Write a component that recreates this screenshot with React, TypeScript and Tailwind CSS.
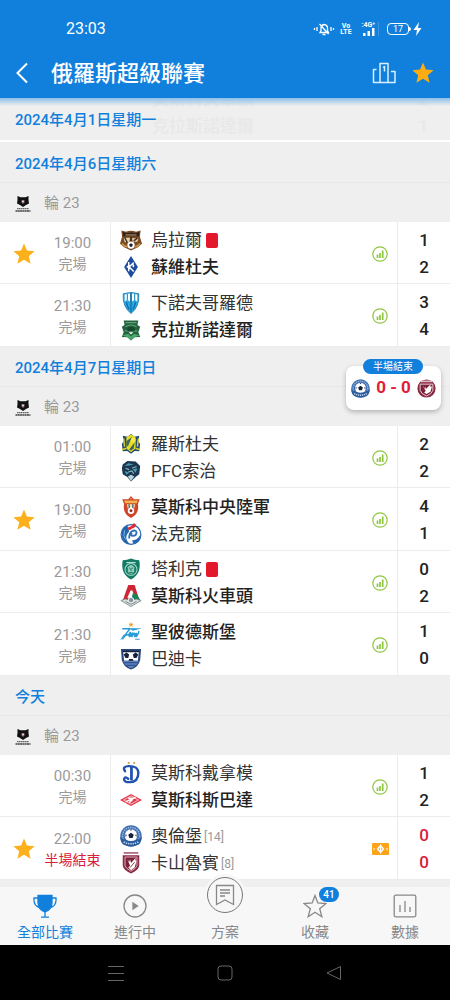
import type { ReactNode } from "react";

const STAR = "M12 .6l3.200 7.700 8.400.7-6.400 5.400 2 8.200-7.200-4.400-7.200 4.400 2-8.200L.4 9l8.400-.7z";

function Star({ className }: { className: string }) {
  return (
    <svg viewBox="0 0 24 24" className={className} aria-hidden="true">
      <path d={STAR} fill="currentColor" />
    </svg>
  );
}

const crests: Record<string, ReactNode> = {
  ural: (
    <>
      <path d="M1.500 1.500l5 1.500Q12 1 17.500 3l5-1.500-.8 7L24 16l-4.500 4L12 23.500 4.500 20 0 16l2.300-7.500z" fill="#7a4a25" />
      <path d="M3 3l4 1.500Q12 3 17 4.500L21 3l-.5 5h-17z" fill="#2c211b" />
      <path d="M6 6.500h12" stroke="#b48d5c" strokeWidth="1.300" />
      <path d="M4 9.500h7l-1 5H5zM13 10h7l-1 4h-5z" fill="#e8d3b0" />
      <path d="M5 9l3 6M12 9v5M19 10l-4 3" stroke="#40271a" strokeWidth="1.600" />
      <path d="M2 16q4 4 6 3M22 16q-4 4-6 3" stroke="#d09548" strokeWidth="1.800" fill="none" />
      <circle cx="12" cy="17.500" r="4" fill="#fff" />
      <path d="M12 15.500l2 1.500-.8 2.300h-2.400L10 17z" fill="#222" />
    </>
  ),
  krylia: (
    <>
      <path d="M12 0l7.500 12L12 24 4.500 12z" fill="#1d4c9e" />
      <path d="M9.500 6.500v10M10 12l5-5M10 12l5 5M7.500 12.500l3-3M13 8.500q3 2 1 3.500" stroke="#fff" strokeWidth="1.600" fill="none" />
    </>
  ),
  nizhny: (
    <>
      <path d="M3.500 2Q12-1 20.500 2q1 14-8.500 21.500Q2.500 16 3.500 2z" fill="#2aa7df" stroke="#2584b8" />
      <path d="M5 3q3-1.500 6-1.500V10q-2 0-3-3-1 3-2.800 3zM13 1.500q3 0 6 1.500l-.2 7Q17 10 16 7q-1 3-3 3z" fill="#fff" />
      <path d="M8 2v6M16 2v6" stroke="#2584b8" strokeWidth="1.200" />
      <path d="M12 1v21M7 11q1 5 3 8M17 11q-1 5-3 8" stroke="#156ba7" strokeWidth="1.400" fill="none" />
    </>
  ),
  krasnodar: (
    <>
      <path d="M4 1.500h16l-1 5 3 2-2 6 2 5-6 .5-4 3.500L8 20l-6-.5 2-5-2-6 3-2z" fill="#21633f" />
      <path d="M6 4h12M6 8.500q6-4 12 0M5 13h14" stroke="#5f9f75" strokeWidth="1.200" fill="none" />
      <path d="M8 9.500q4-2 8 0V13H8z" fill="#164a2d" />
      <path d="M2 18l7-2 3 3 3-3 7 2-6 1.500-4 3.500-4-3.500z" fill="#49a968" />
      <path d="M9.500 14.500h5L12 17z" fill="#fff" />
    </>
  ),
  rostov: (
    <>
      <path d="M3 3l5 1 4-3 4 3 5-1-1 6 2 3-1 8-5-.5-4 3-4-3-5 .5-1-8 2-3z" fill="#254d6e" />
      <path d="M7 4.500l5-3 5 3v12L12 21l-5-4z" fill="#e9dc22" />
      <path d="M7 9l6-5-4 10-2 1zM10 18l6-8-1 7-3 2z" fill="#3b6665" />
      <circle cx="14.500" cy="7.500" r="2.600" fill="#f5ea4b" />
      <path d="M2 18l5-1M17 17l5 1M4 6l1 9M20 6l-1 9" stroke="#dccf2c" strokeWidth="1.600" />
    </>
  ),
  sochi: (
    <>
      <path d="M3 5l5-4 9 .5 5 5-1 9-4 3-5 5-4-5-5-3L2 9z" fill="#1c3752" />
      <path d="M5 6.500l4-3 6 1.500-5 1zM14 10l5-1-2 5zM5 12l5 2-3 2z" fill="#4b9cad" />
      <path d="M6 9l4 1.500M13 9l5-2M9 13l4-1 2 3" stroke="#86bcc5" strokeWidth="1.200" fill="none" />
      <path d="M8.500 18l3.500-2 3.500 2-3.500 5z" fill="#b7d7e1" />
    </>
  ),
  cska: (
    <>
      <path d="M12 0l3 3.500h6.500L19.500 9q2 10-7.500 15Q2.500 19 4.500 9l-2-5.500H9z" fill="#ce4327" />
      <path d="M4.500 5h15l-1 3h-13z" fill="#efb44d" />
      <path d="M7 9h10q1 7-5 12Q6 16 7 9z" fill="#d9582f" />
      <path d="M7.500 9h9l-1 4h-7z" fill="#f8e3a5" />
      <path d="M10 9v4M14 9v4" stroke="#274f93" strokeWidth="1.300" />
      <path d="M12 1.500l.8 2h-1.600z" fill="#ffe476" />
      <circle cx="12" cy="16" r="3.500" fill="#fff" />
      <circle cx="12" cy="16" r="1.600" fill="#a32a25" />
    </>
  ),
  fakel: (
    <>
      <circle cx="12" cy="12.500" r="10.800" fill="#fff" stroke="#2868ad" strokeWidth="1.300" />
      <path d="M8 2.500A11 11 0 0 0 11 23.300q-5-4-4-9 1-3 3-5z" fill="#2566b0" />
      <path d="M15 23q8-3 7.500-11-3 7-9.500 7z" fill="#2566b0" />
      <path d="M10 17q0-6 3-8 4-2 5 1 0 4-4 4-3 0-1-3" fill="none" stroke="#2b70b7" strokeWidth="2" />
      <path d="M8 5q5-1 7-5 2 2 3 1.500Q16 6 13 6q-1 2-3.500 1.500z" fill="#e62938" />
      <path d="M5 8q-2 6 1 10" stroke="#8bbbe0" fill="none" />
    </>
  ),
  akhmat: (
    <>
      <path d="M12 .5q4 2 9 2Q24 17 12 23.500 0 17 3 2.500q5 0 9-2z" fill="#137a65" />
      <path d="M7 5h10" stroke="#b9e0d4" strokeWidth="1.400" />
      <circle cx="12" cy="12.500" r="6.500" fill="none" stroke="#97d0bf" strokeWidth="1.200" />
      <path d="M8.500 10q3.500-5 7 0v5q-3.500 5-7 0z" fill="#8fcbbb" />
      <path d="M10 11h1m2 0h1m-2 0v3m-2 2h4" stroke="#0b6a56" />
    </>
  ),
  lokomotiv: (
    <>
      <path d="M9 0h7l5 16-9 4-9-3z" fill="#cf2635" />
      <path d="M11.500 6h2l2.500 8H8z" fill="#fff" />
      <path d="M14 9l4 1 4 6-7 4-3-3z" fill="#16845a" />
      <path d="M1 17q5-3 8-1 3-4 6 0 3-2 8 1l-11 6.500z" fill="#d5dcdc" stroke="#6a7777" strokeWidth=".8" />
      <circle cx="12" cy="16.500" r="3" fill="#84949a" stroke="#fff" />
      <path d="M6 18l6 3 6-3" stroke="#7a8989" fill="none" />
    </>
  ),
  zenit: (
    <>
      <path d="M3 8.500h8q-3 3-8 11M7 15h4q2-2 0-2.500-2 2-1 4.500 2 0 3-2l1-2-1 4q3-5 3.500-3l-.5 3q1.500-1 2-3.500l-.5 3.500q2-1 3-5.500" fill="none" stroke="#249bd5" strokeWidth="1.500" strokeLinejoin="round" strokeLinecap="round" />
      <path d="M10 8h14l-10 2.500zM0 21l4-6 6-1-4 2.500z" fill="#249bd5" />
      <path d="M12 1l.8 2h2.200l-1.700 1.400.7 2.100-2-1.200-2 1.200.7-2.100L9 3h2.200z" fill="#e8a13b" />
      <path d="M16.500 20h5" stroke="#65a7cf" strokeWidth="1.300" />
    </>
  ),
  baltika: (
    <>
      <path d="M1 1h22l-1 12q-2 8-10 10.500Q4 21 2 13z" fill="#28477d" />
      <path d="M3.500 4h17l-1 10h-15z" fill="#fff" />
      <path d="M3 3h18v1.500H3zM4 7l3-2 3 2-1 4H6zm10 0l3-2 3 2-2 4h-3zM10 12h4l1 3H9z" fill="#17213a" />
      <path d="M3.500 14h17q-2 6-8.500 8-6.500-2-8.500-8z" fill="#5c83bd" />
      <path d="M5 16h14M7 19h10" stroke="#2f5491" strokeWidth="1.300" />
    </>
  ),
  dynamo: (
    <>
      <path d="M8.500 1h2m4 0h2" stroke="#c69c3a" strokeWidth="1.800" />
      <path d="M12.500 5v15" stroke="#2152ae" strokeWidth="3" />
      <path d="M5.500 10Q2 5 9 4.500 20 4 20 12q0 9.500-9 10-7 .2-6.500-3.500Q5.500 15 9 18.500" fill="none" stroke="#2152ae" strokeWidth="2.600" strokeLinecap="round" />
    </>
  ),
  spartak: (
    <>
      <path d="M0 12L12 5.500 24 12l-12 6.500z" fill="#e13b4d" />
      <path d="M4 12l8-4.500L20 12l-8 4.500z" fill="none" stroke="#ffc9ce" />
      <path d="M6 14l11-5M9 10h4q2 1-1 3l-2 2" fill="none" stroke="#fff" strokeWidth="1.600" />
    </>
  ),
  orenburg: (
    <>
      <circle cx="12" cy="12" r="11.700" fill="#3f70b3" />
      <circle cx="12" cy="12" r="9.300" fill="none" stroke="#a5bfe2" strokeWidth="1.500" strokeDasharray="1.500 1" />
      <circle cx="12" cy="11.500" r="6.800" fill="#fff" />
      <path d="M12 8.500l3 2.200-1.200 3.500h-3.600L9 10.700zM11 5h2l-1 1.500zM6 10l1.500 1L6 13zM18 10l-1.500 1 1.500 2z" fill="#15243a" />
      <path d="M0 13q12 9 24 0-1 7-4 8.500-8 4-16 0Q1 20 0 13z" fill="#2b5d9f" />
      <path d="M4 18.500q8 4 16 0" fill="none" stroke="#c5d5ec" strokeWidth="1.700" strokeDasharray="1.500 1" />
    </>
  ),
  rubin: (
    <>
      <path d="M4 1h16" stroke="#a8627a" strokeWidth="1.800" />
      <path d="M3 3.500h18v11.500q-1 5-9 8.500Q4 20 3 15z" fill="#8a2942" />
      <path d="M5.500 5.500h13V15q-1 3-6.500 6-5.500-3-6.500-6z" fill="#7a2038" stroke="#e2bcc7" />
      <path d="M8 8l2 3 1-3 1 4 5-5.500v3l1 .5-2 7-4 3-3-3 2-2z" fill="#fff" />
      <path d="M11 17l5-6" stroke="#8a2942" />
    </>
  ),
  rubinRound: (
    <>
      <circle cx="12" cy="12" r="11.500" fill="#8a2942" />
      <path d="M5 3h14" stroke="#dfbfc9" strokeWidth="2" />
      <path d="M4 6.500h16v8q-1 4-8 7-7-3-8-7z" fill="#7a2038" stroke="#ecd4da" strokeWidth="1.200" />
      <path d="M7 8l3 4 1-3v4l6-6v3l2-1-2 7-5 3-3-2 2-2z" fill="#fff" />
    </>
  ),
};

function Crest({ id, className = "size-[22px]" }: { id: string; className?: string }) {
  return (
    <svg viewBox="0 0 24 24" className={`${className} shrink-0`} aria-hidden="true">
      {crests[id]}
    </svg>
  );
}

function LeagueLogo() {
  return (
    <svg viewBox="0 0 16 16" className="size-4 shrink-0" aria-hidden="true">
      <path d="M2.500 0l3 1.200h5l3-1.200v4l.5 3.500-3 1.500-3 2-3-2-3-1.500L2.500 4z" fill="#111" />
      <path d="M6.500 4h3v2.500L8 8 6.500 6.500z" fill="#8c6468" />
      <path d="M7.300 4.700h1.400v1.500H7.300z" fill="#fff" />
      <path d="M2 12.700h12" stroke="#666" strokeWidth="1.200" strokeDasharray="1.600 .4" />
      <path d="M.5 15h15" stroke="#444" strokeWidth="1.500" strokeDasharray="2 .3" />
    </svg>
  );
}

function StatsIcon() {
  return (
    <svg viewBox="0 0 16 16" className="size-4" fill="none" stroke="#8fc641" aria-hidden="true">
      <circle cx="8" cy="8" r="7.200" strokeWidth="1.200" />
      <path d="M5.500 8.500V12M8 7v5M10.700 4.500V12" strokeWidth="1.700" />
    </svg>
  );
}

function CashIcon() {
  return (
    <svg viewBox="0 0 17 12" className="h-3 w-[17px]" aria-hidden="true">
      <rect width="17" height="12" rx="1" fill="#fba41a" />
      <path d="M1.500 4.500L3 6 1.500 7.500zM15.500 4.500L14 6l1.500 1.500z" fill="#fff" />
      <path d="M8.500 2.500L11.500 6l-3 3.500L5.500 6z" fill="none" stroke="#fff" strokeWidth="1.300" />
      <path d="M8.500 1.500v9M7.500 5h2M7.500 7h2" stroke="#fff" />
    </svg>
  );
}

type Team = { name: string; crest: string; score: number; winner?: boolean; red?: boolean; rank?: number };
type Match = { time: string; starred?: boolean; live?: boolean; teams: [Team, Team] };

const days: { date: string; matches: Match[] }[] = [
  {
    date: "2024年4月6日星期六",
    matches: [
      { time: "19:00", starred: true, teams: [{ name: "烏拉爾", crest: "ural", score: 1, red: true }, { name: "蘇維杜夫", crest: "krylia", score: 2, winner: true }] },
      { time: "21:30", teams: [{ name: "下諾夫哥羅德", crest: "nizhny", score: 3 }, { name: "克拉斯諾達爾", crest: "krasnodar", score: 4, winner: true }] },
    ],
  },
  {
    date: "2024年4月7日星期日",
    matches: [
      { time: "01:00", teams: [{ name: "羅斯杜夫", crest: "rostov", score: 2 }, { name: "PFC索治", crest: "sochi", score: 2 }] },
      { time: "19:00", starred: true, teams: [{ name: "莫斯科中央陸軍", crest: "cska", score: 4, winner: true }, { name: "法克爾", crest: "fakel", score: 1 }] },
      { time: "21:30", teams: [{ name: "塔利克", crest: "akhmat", score: 0, red: true }, { name: "莫斯科火車頭", crest: "lokomotiv", score: 2, winner: true }] },
      { time: "21:30", teams: [{ name: "聖彼德斯堡", crest: "zenit", score: 1, winner: true }, { name: "巴迪卡", crest: "baltika", score: 0 }] },
    ],
  },
  {
    date: "今天",
    matches: [
      { time: "00:30", teams: [{ name: "莫斯科戴拿模", crest: "dynamo", score: 1 }, { name: "莫斯科斯巴達", crest: "spartak", score: 2, winner: true }] },
      { time: "22:00", starred: true, live: true, teams: [{ name: "奧倫堡", crest: "orenburg", score: 0, rank: 14 }, { name: "卡山魯賓", crest: "rubin", score: 0, rank: 8 }] },
    ],
  },
];

function MatchRow({ match }: { match: Match }) {
  return (
    <li className="flex h-[62px] border-b border-[#ececec] bg-white even:h-[63px]">
      <div className="flex w-[35px] shrink-0 items-center pt-0.5 pl-[13px]">
        {match.starred && (
          <button type="button" aria-label="取消收藏" className="text-[#fbb01c]">
            <Star className="size-[22px]" />
          </button>
        )}
      </div>
      <div className="flex w-[75px] shrink-0 flex-col items-center justify-center pt-[3px] text-[#9a9a9a]">
        <time className="text-[15px] leading-[21px]">{match.time}</time>
        <span className={match.live ? "text-[14px] leading-[21px] text-[#d9203a]" : "text-[14px] leading-[21px]"}>
          {match.live ? "半場結束" : "完場"}
        </span>
      </div>
      <div className="flex min-w-0 flex-1 flex-col justify-center border-l border-[#ececec] pt-0.5 pl-[9px]">
        {match.teams.map((t) => (
          <div key={t.name} className="flex h-[27px] items-center">
            <Crest id={t.crest} />
            <span className={t.winner ? "ml-[9px] pt-0.5 text-[17px] font-medium text-[#222]" : "ml-[9px] pt-0.5 text-[17px] text-[#333]"}>{t.name}</span>
            {t.red && <span role="img" aria-label="紅牌" className="ml-1 h-[15px] w-3 rounded-[2px] bg-[#e3182d]" />}
            {t.rank && <span className="ml-0.5 pt-0.5 text-[12px] text-[#999]">[{t.rank}]</span>}
          </div>
        ))}
      </div>
      <div className="flex w-9 shrink-0 items-center justify-center pt-0.5 pl-0.5">{match.live ? <CashIcon /> : <StatsIcon />}</div>
      <div
        className={
          match.live
            ? "flex w-[53px] shrink-0 flex-col items-center justify-center border-l border-[#ececec] pt-0.5 text-[17px] leading-[27px] font-medium text-[#d9203a]"
            : "flex w-[53px] shrink-0 flex-col items-center justify-center border-l border-[#ececec] pt-0.5 text-[17px] leading-[27px] font-medium text-[#222]"
        }
      >
        <span>{match.teams[0].score}</span>
        <span>{match.teams[1].score}</span>
      </div>
    </li>
  );
}

function StatusBar() {
  return (
    <div className="flex h-12 items-center justify-between pt-2.5 pr-7 pl-[66px]">
      <span className="text-[16px]">23:03</span>
      <div className="flex items-center gap-1.5">
        <svg viewBox="0 0 22 14" className="h-3.5 w-[22px]" fill="none" stroke="currentColor" strokeWidth="1.300" aria-hidden="true">
          <path d="M1.500 6v2M4 5v4M18 5v4M20.500 6v2M7 10.500h8.500l-1-2V6q0-3-3.500-3.500Q8 3 8 6v2.500zM9.500 12.500h3M6.500 2l9 10" />
        </svg>
        <span className="flex w-2.5 flex-col items-center text-[7px] leading-[6px] font-bold">
          <span>Vo</span>
          <span>LTE</span>
        </span>
        <span className="flex h-[14px] w-[22px] flex-col items-end border-r border-[#3c97e2] pr-[3px]">
          <span className="text-[7px] leading-[6px] font-bold">:4G⁺</span>
          <svg viewBox="0 0 12 8" className="h-2 w-3" fill="currentColor" aria-hidden="true">
            <path d="M0 5h2.500v3H0zM4.500 3H7v5H4.500zM9 0h2.500v8H9z" />
          </svg>
        </span>
        <span className="flex items-center">
          <span className="ml-0.5 flex h-3 w-[22px] items-center justify-center rounded-[4px] border border-white text-[9px] leading-none">17</span>
          <span className="h-1 w-0.5 rounded-r-sm bg-white" />
          <svg viewBox="0 0 9 14" className="ml-0.5 h-3.5 w-[9px]" fill="currentColor" aria-hidden="true">
            <path d="M6 0L.5 8H4l-1 6 5.500-8H5z" />
          </svg>
        </span>
      </div>
    </div>
  );
}

function LiveCard() {
  return (
    <button type="button" className="absolute top-[366px] right-[9px] flex h-11 w-[95px] items-center justify-between rounded-lg bg-white px-[5px] shadow-[0_2px_5px_rgba(0,0,0,0.25)]">
      <span className="absolute -top-[7px] left-[17px] flex h-[15px] w-[60px] items-center justify-center rounded-full bg-[#1180dc] text-[10px] leading-none text-white">半場結束</span>
      <Crest id="orenburg" className="size-[19px]" />
      <span className="text-[17px] font-bold text-[#e0203a]">0 - 0</span>
      <Crest id="rubinRound" className="size-[19px]" />
    </button>
  );
}

const tabs: { label: string; icon: ReactNode; active?: boolean; count?: number; raised?: boolean }[] = [
  {
    label: "全部比賽",
    active: true,
    icon: (
      <>
        <path d="M5 1.500h14v7q0 7-7 9.500-7-2.500-7-9.500z" fill="currentColor" />
        <path d="M5 4H1q-.7 8.500 6 9.500M19 4h4q.7 8.500-6 9.500M12 17v6M8 23.200h8" />
      </>
    ),
  },
  {
    label: "進行中",
    icon: (
      <>
        <circle cx="12" cy="12" r="11" />
        <path d="M10 9v6l4.500-3z" fill="currentColor" />
      </>
    ),
  },
  { label: "方案", raised: true, icon: <path d="M3.500 2.500h17v19L12 17l-8.500 4.500zM7 7h10M7 10h10M7 13h5" /> },
  { label: "收藏", count: 41, icon: <path d="M12 1.500l2.800 7.500 8.200.5-6.300 5.200 2.100 8L12 18.300l-6.800 4.400 2.100-8L1 9.500 9.200 9z" /> },
  {
    label: "數據",
    icon: (
      <>
        <rect x="1.200" y="1.200" width="21.600" height="21.600" rx="1.500" />
        <path d="M7 11v7M12 7v11M17 13v5" />
      </>
    ),
  },
];

export default function App() {
  return (
    <div className="relative min-h-screen bg-[#efefef] font-['Roboto','Noto_Sans_CJK_TC',sans-serif]">
      <header className="bg-[#1180dc] text-white">
        <StatusBar />
        <div className="flex h-[50px] items-center pr-4 pl-4">
          <button type="button" aria-label="返回" className="w-[35px]">
            <svg viewBox="0 0 12 22" className="h-[22px] w-3" fill="none" stroke="currentColor" strokeWidth="2" aria-hidden="true">
              <path d="M11 1.500L1.500 11l9.500 9.500" />
            </svg>
          </button>
          <h1 className="flex-1 pt-0.5 text-[22px] leading-8 font-medium">俄羅斯超級聯賽</h1>
          <button type="button" aria-label="積分榜">
            <svg viewBox="0 0 24 22" className="h-[22px] w-6" fill="none" stroke="#d8efff" strokeWidth="1.500" strokeLinejoin="round" aria-hidden="true">
              <path d="M12.500 20.500H1.500v-13h3M8 20.500V1.500h8v19M12 20.500h11v-11h-4M11 5.500l1.500-1v5" />
            </svg>
          </button>
          <button type="button" aria-label="收藏聯賽" className="ml-4 text-[#ffab12]">
            <Star className="size-[22px]" />
          </button>
        </div>
      </header>

      <main>
        <div className="relative mb-[3px] h-[42px] overflow-hidden shadow-[0_2px_0_#fff]">
          <div aria-hidden="true" className="flex h-full justify-between pr-[22px] pl-[152px] text-[17px] leading-[27px] font-medium text-[#e8e8e8]">
            <div className="-mt-3">
              <p>莫斯科火車頭</p>
              <p>克拉斯諾達爾</p>
            </div>
            <div className="-mt-3 text-right">
              <p>2</p>
              <p>1</p>
            </div>
          </div>
          <div className="absolute inset-x-0 top-0 h-2 bg-linear-to-b from-[#8cbfe9] to-transparent" />
          <h2 className="absolute inset-0 flex items-center pt-0.5 pl-[15px] text-[15px] font-medium text-[#1180dc]">2024年4月1日星期一</h2>
        </div>

        {days.map((day) => (
          <section key={day.date}>
            <h2 className="flex h-10 items-center border-b border-[#e8e8e8] pt-1 pl-[15px] text-[15px] font-medium text-[#1180dc]">{day.date}</h2>
            <div className="flex h-[39px] items-center gap-[13px] pt-0.5 pl-[15px] text-[15px] text-[#9a9a9a]">
              <LeagueLogo />
              <h3>輪 23</h3>
            </div>
            <ul>
              {day.matches.map((m) => (
                <MatchRow key={m.teams[0].name} match={m} />
              ))}
            </ul>
          </section>
        ))}
      </main>

      <LiveCard />

      <nav className="mt-[7px] flex h-[58px] bg-[#f7f7f7]">
        {tabs.map((tab) => (
          <a
            key={tab.label}
            href="#"
            className={
              tab.active
                ? "flex flex-1 flex-col items-center justify-end pb-0.5 text-[#1180dc]"
                : "flex flex-1 flex-col items-center justify-end pb-0.5 text-[#888]"
            }
          >
            <span className={tab.raised ? "flex size-11 items-center justify-center rounded-full bg-[#f7f7f7]" : "relative flex h-[30px] items-center justify-center"}>
              <span className={tab.raised ? "mb-2 flex size-9 shrink-0 items-center justify-center rounded-full border border-[#777] bg-[#f7f7f7] ring-3 ring-[#f7f7f7]" : "flex"}>
                <svg viewBox="0 0 24 24" className="size-6" fill="none" stroke="currentColor" strokeWidth="1.300" aria-hidden="true">
                  {tab.icon}
                </svg>
              </span>
              {tab.count && (
                <span className="absolute -top-1 left-4 flex h-[15px] w-5 items-center justify-center rounded-full bg-[#1180dc] text-[10px] font-medium text-white">{tab.count}</span>
              )}
            </span>
            <span className="text-[14px] leading-[22px]">{tab.label}</span>
          </a>
        ))}
      </nav>

      <footer className="flex h-[55px] items-center bg-black text-[#666]">
        <div className="mx-auto flex w-[52%] items-center justify-between">
          <button type="button" aria-label="最近使用">
            <svg viewBox="0 0 16 16" className="size-4" stroke="currentColor" aria-hidden="true">
              <path d="M0 1.500h16M0 8.500h16M0 15.500h16" />
            </svg>
          </button>
          <button type="button" aria-label="主畫面">
            <svg viewBox="0 0 16 16" className="size-4" fill="none" stroke="currentColor" aria-hidden="true">
              <rect x="1" y="1" width="14" height="14" rx="3" />
            </svg>
          </button>
          <button type="button" aria-label="返回上一頁">
            <svg viewBox="0 0 16 16" className="size-4" fill="none" stroke="currentColor" strokeLinejoin="round" aria-hidden="true">
              <path d="M14.500 1.500v13L1 8z" />
            </svg>
          </button>
        </div>
      </footer>
    </div>
  );
}
